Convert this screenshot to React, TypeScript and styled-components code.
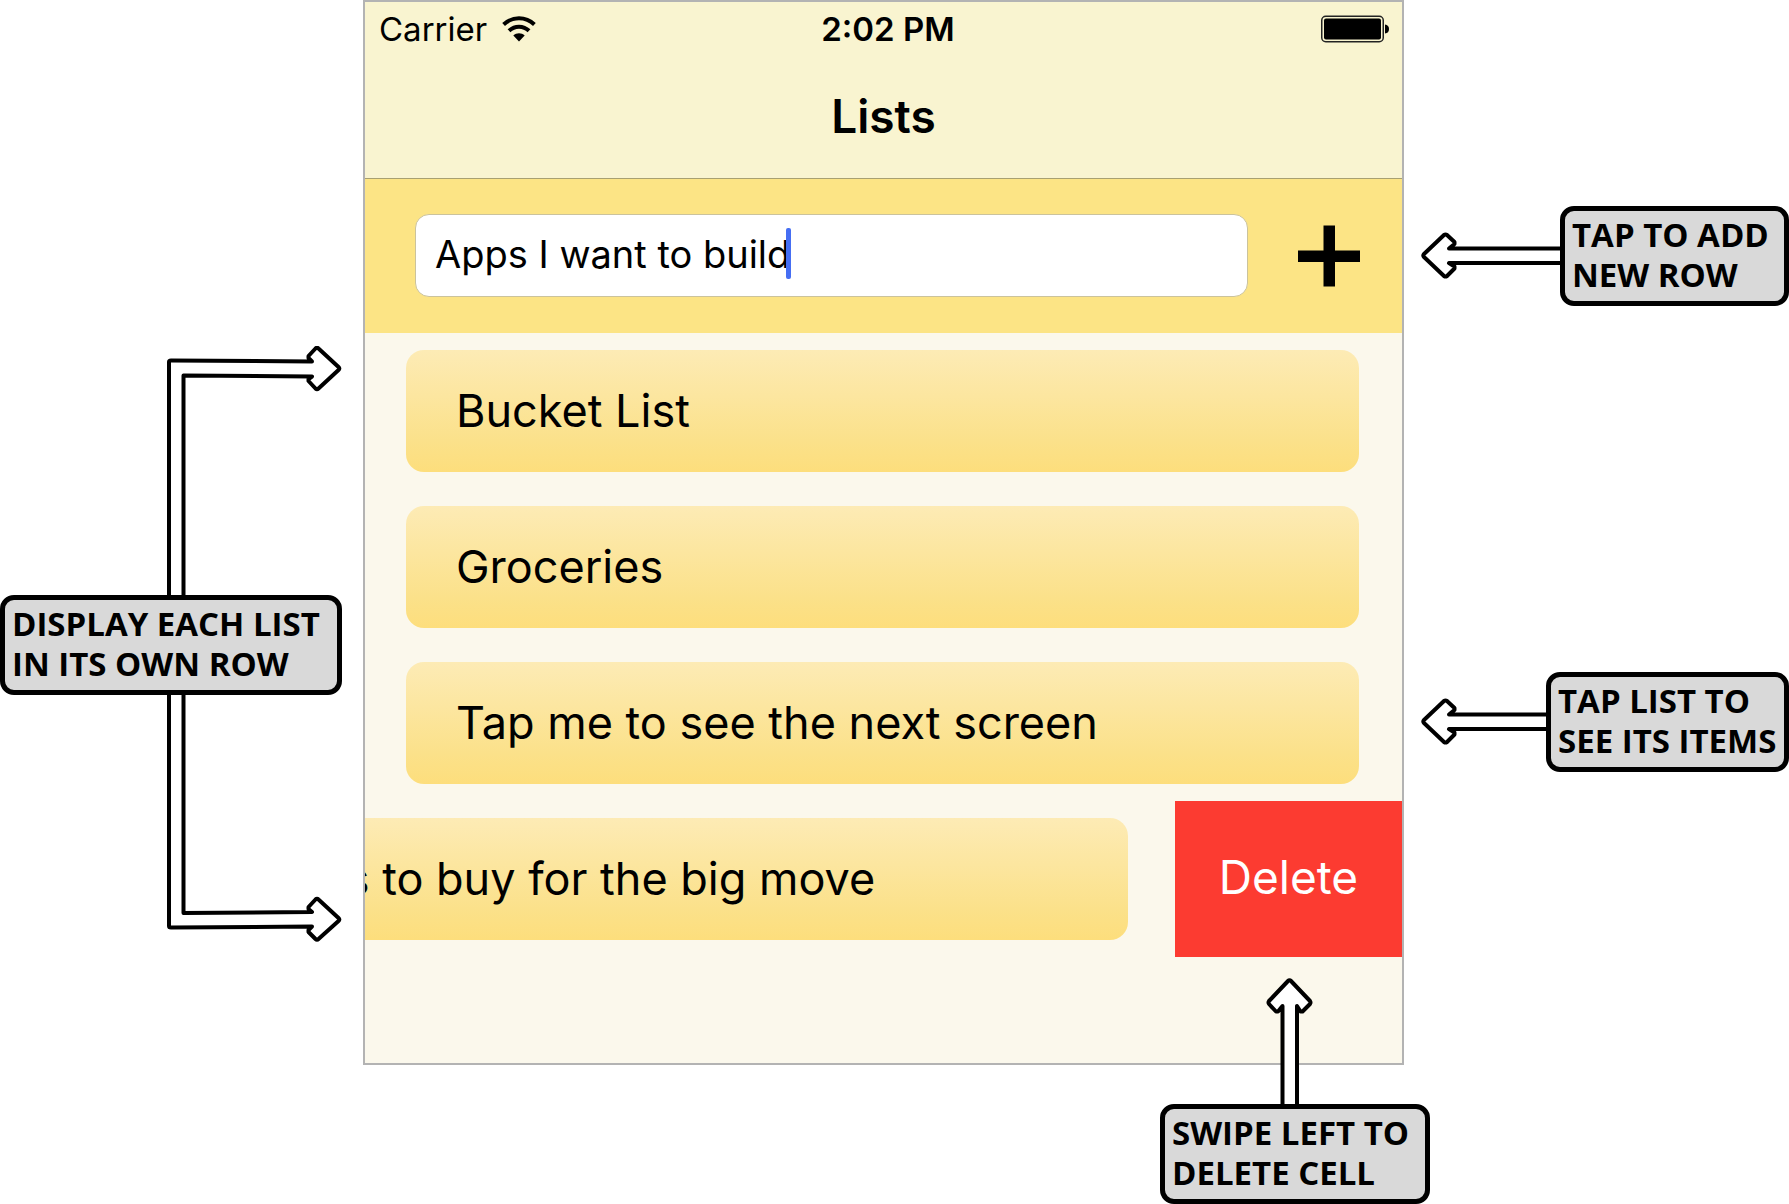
import React, { useState } from "react";
import styled, { createGlobalStyle } from "styled-components";

const GlobalStyle = createGlobalStyle`
  *, *::before, *::after { box-sizing: border-box; }
  body {
    margin: 0;
    background: #fff;
    color: #000;
    font-family: Inter, "Liberation Sans", sans-serif;
  }
  button, input { font: inherit; color: inherit; }
`;

const Page = styled.div`
  display: grid;
  grid-template-columns: 363px minmax(0, 1fr) 385px;
  align-items: start;
`;

/* ---------- phone ---------- */

const Phone = styled.main`
  border: 2px solid #b3b3b3;
  background: #fbf8ec;
  padding-bottom: 106px;
  overflow: hidden;
`;

const Header = styled.header`
  background: #f9f4d0;
  border-bottom: 1px solid #a9a070;
`;

const StatusBar = styled.div`
  display: grid;
  grid-template-columns: 1fr auto 1fr;
  align-items: center;
  height: 54px;
  padding: 0 13px 0 14px;
  font-size: 33px;
  line-height: 40px;
`;

const Carrier = styled.div`
  display: flex;
  align-items: center;
  gap: 15px;
`;

const Clock = styled.time`
  font-weight: 600;
  padding-left: 8px;
`;

const Battery = styled.svg`
  justify-self: end;
`;

const Title = styled.h1`
  margin: 0;
  padding: 32px 0 34px;
  font-size: 46px;
  line-height: 56px;
  font-weight: 600;
  text-align: center;
`;

const AddBar = styled.form`
  display: flex;
  align-items: center;
  gap: 50px;
  padding: 35px 42px 36px 50px;
  background: #fce485;
`;

const Field = styled.div`
  position: relative;
  flex: 1;
  min-width: 0;
`;

const TextInput = styled.input`
  display: block;
  width: 100%;
  height: 83px;
  padding: 0 19px 3px;
  border: 1px solid #cbc39c;
  border-radius: 14px;
  outline: none;
  background: #fff;
  font-size: 38px;
  caret-color: transparent;
`;

const Caret = styled.span`
  position: absolute;
  left: 371px;
  top: 14px;
  width: 5px;
  height: 51px;
  border-radius: 2px;
  background: #456ef3;
`;

const AddButton = styled.button`
  display: flex;
  padding: 0;
  border: 0;
  background: none;
`;

const Lists = styled.ul`
  margin: 0;
  padding: 0;
  list-style: none;
`;

const Cell = styled.li`
  display: flex;
  justify-content: flex-end;
  gap: 4px;
  height: 156px;
  overflow: hidden;
`;

const CellBody = styled.div`
  flex: none;
  width: 100%;
  padding: 17px 43px 17px 41px;
`;

const Card = styled.button`
  display: block;
  width: 100%;
  height: 122px;
  padding: 0 50px;
  border: 0;
  border-radius: 18px;
  background: linear-gradient(#fdebb5, #fbe18a 75%, #fdde7c);
  font-size: 45px;
  line-height: 56px;
  text-align: left;
  white-space: nowrap;
`;

const DeleteButton = styled.button`
  flex: none;
  width: 227px;
  padding: 0 0 4px;
  border: 0;
  background: #fc3b31;
  color: #fff;
  font-size: 46px;
`;

/* ---------- callouts ---------- */

const LeftNotes = styled.aside`
  display: flex;
  flex-direction: column;
  padding-top: 346px;
`;

const RightNotes = styled.aside`
  display: flex;
  flex-direction: column;
  gap: 366px;
  padding-top: 206px;
`;

const Callout = styled.div`
  display: flex;
  align-items: center;
  justify-content: flex-end;
`;

const BottomCallout = styled.div`
  position: relative;
  grid-column: 1 / -1;
  justify-self: end;
  margin: 39px 359px 0 0;
`;

const Note = styled.p<{ $width: number }>`
  width: ${(p) => p.$width}px;
  margin: 0;
  padding: 4px 0 6px 7px;
  border: 5px solid #000;
  border-radius: 14px;
  background: #d9d9d9;
  font-family: "Open Sans", "Noto Sans", sans-serif;
  font-size: 33px;
  line-height: 40px;
  font-weight: 700;
  white-space: nowrap;
`;

const Drawing = styled.svg`
  display: block;
  flex: none;
  fill: #fff;
  stroke: #000;
  stroke-width: 4;
  stroke-linejoin: round;
`;

const UpArrow = styled(Drawing)`
  position: absolute;
  left: 106px;
  bottom: 100%;
`;

const LeftArrow = ({ length }: { length: number }) => (
  <Drawing width={length} height={48} aria-hidden="true">
    <path
      d={`M${length + 4} 16.5H28L33.5 12V10L26 3Q24.500 2 23 3L3 22Q1.500 23.500 3 25L23 44Q24.500 45 26 44L33.500 36.500V34.500L28 31H${length + 4}`}
    />
  </Drawing>
);

const WifiIcon = () => (
  <svg width="34" height="26" viewBox="0 0 34 26" fill="none" stroke="#000" aria-hidden="true">
    <path d="M1.600 8.500C10.300 .3 23.700 .3 32.400 8.500" strokeWidth="4" />
    <path d="M7 14.800C12.600 9.300 21.400 9.300 27 14.800" strokeWidth="4" />
    <path d="M17 25.500L11.300 19.500C14.500 16.500 19.500 16.500 22.700 19.500Z" fill="#000" stroke="none" />
  </svg>
);

const rows = ["Bucket List", "Groceries", "Tap me to see the next screen"];

export default function App() {
  const [name, setName] = useState("Apps I want to build");
  return (
    <>
      <GlobalStyle />
      <Page>
        <LeftNotes>
          <Drawing width="342" height="249" viewBox="0 346 342 249" aria-hidden="true">
            <path d="M169 597V362Q169 360.500 171 360.500L312 361.500L308.500 358V356L315.500 348.500Q317 347 318.500 348.500L338.500 367Q340 368.500 338.500 370L318.500 388.500Q317 390 315.500 388.500L308.500 381V379L312 376.500L183.500 375.500V597" />
          </Drawing>
          <Note $width={342}>
            DISPLAY EACH LIST
            <br />
            IN ITS OWN ROW
          </Note>
          <Drawing width="342" height="247" viewBox="0 695 342 247" aria-hidden="true">
            <path d="M169 693V926Q169 927.500 171 927.500L312 926.500L308.500 930V932L315.500 939Q317 940.500 318.500 939L338.500 921Q340 919.500 338.500 918L318.500 899.500Q317 898 315.500 899.500L308.500 907V909L312 912L183.500 913V693" />
          </Drawing>
        </LeftNotes>

        <Phone>
          <Header>
            <StatusBar>
              <Carrier>
                Carrier
                <WifiIcon />
              </Carrier>
              <Clock>2:02 PM</Clock>
              <Battery width="68" height="28" viewBox="0 0 68 28" role="img" aria-label="Battery full">
                <rect x="0.750" y="1.250" width="61.500" height="25.500" rx="4" fill="none" stroke="#222" strokeWidth="1.500" />
                <rect x="3" y="3.500" width="57" height="21" rx="2" />
                <path d="M64 9.500Q68 10 68 14T64 18.500Z" />
              </Battery>
            </StatusBar>
            <Title>Lists</Title>
          </Header>

          <AddBar onSubmit={(e) => e.preventDefault()}>
            <Field>
              <TextInput
                aria-label="New list name"
                value={name}
                onChange={(e) => setName(e.target.value)}
              />
              <Caret />
            </Field>
            <AddButton type="submit" aria-label="Add list">
              <svg width="62" height="62" viewBox="0 0 62 62" aria-hidden="true">
                <path d="M25.500 0.500H37V25.500H62V37H37V61.500H25.500V37H0V25.500H25.500Z" />
              </svg>
            </AddButton>
          </AddBar>

          <Lists>
            {rows.map((row) => (
              <Cell key={row}>
                <CellBody>
                  <Card type="button">{row}</Card>
                </CellBody>
              </Cell>
            ))}
            <Cell>
              <CellBody>
                <Card type="button">Things to buy for the big move</Card>
              </CellBody>
              <DeleteButton type="button">Delete</DeleteButton>
            </Cell>
          </Lists>
        </Phone>

        <RightNotes>
          <Callout>
            <LeftArrow length={139} />
            <Note $width={229}>
              TAP TO ADD
              <br />
              NEW ROW
            </Note>
          </Callout>
          <Callout>
            <LeftArrow length={125} />
            <Note $width={243}>
              TAP LIST TO
              <br />
              SEE ITS ITEMS
            </Note>
          </Callout>
        </RightNotes>

        <BottomCallout>
          <UpArrow width="48" height="126" aria-hidden="true">
            <path d="M16.500 130V28L12 33.500H10L3 26Q2 24.500 3 23L22 3Q23.500 1.500 25 3L44 23Q45 24.500 44 26L36.500 33.500H34.500L31 28V130" />
          </UpArrow>
          <Note $width={270}>
            SWIPE LEFT TO
            <br />
            DELETE CELL
          </Note>
        </BottomCallout>
      </Page>
    </>
  );
}
